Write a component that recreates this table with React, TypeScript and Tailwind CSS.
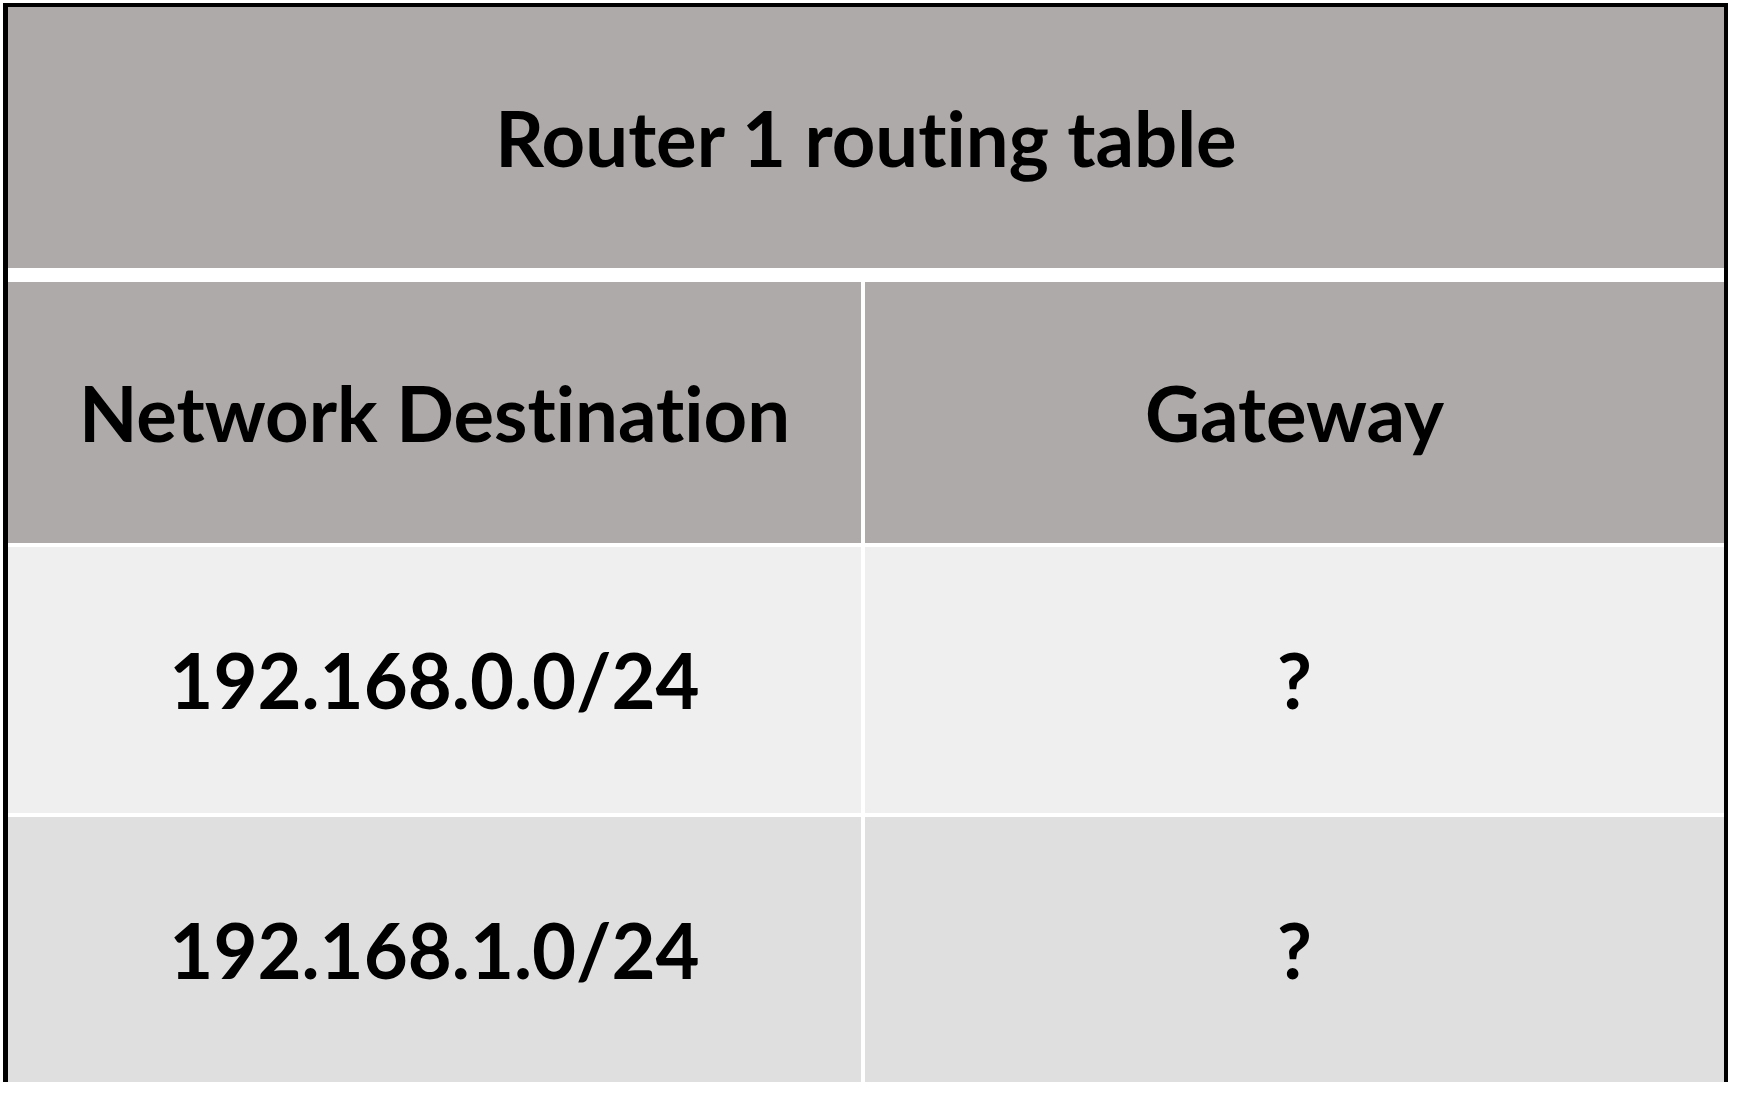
export default function App() {
  const rows = [
    { dest: '192.168.0.0/24', gw: '?', bg: 'bg-[#efefef]', h: 'h-[266px]' },
    { dest: '192.168.1.0/24', gw: '?', bg: 'bg-[#dfdfdf]', h: 'h-[265px]' },
  ];

  return (
    <div className="w-[1741px] h-[1100px] bg-white pl-[3px] pt-[3px] font-['Lato',sans-serif] font-bold text-black [font-variant-ligatures:none]">
      {/* Table */}
      <div className="w-[1725px] border-[5px] border-t-4 border-r-4 border-b-0 border-black bg-white flex flex-col">
        <div className="h-[261px] bg-[#aeaaa9] flex items-center justify-center text-[76px] leading-none">
          Router 1 routing table
        </div>
        <div className="h-[14px]" />
        <div className="flex gap-[4px] h-[261px]">
          <div className="w-[853px] bg-[#aeaaa9] flex items-center justify-center text-[76px] leading-none">
            Network Destination
          </div>
          <div className="flex-1 bg-[#aeaaa9] flex items-center justify-center text-[76px] leading-none">
            Gateway
          </div>
        </div>
        {rows.map((r) => (
          <div key={r.dest} className={`flex gap-[4px] mt-[4px] ${r.h}`}>
            <div className={`w-[853px] ${r.bg} flex items-center justify-center text-[76px] leading-none`}>
              {r.dest}
            </div>
            <div className={`flex-1 ${r.bg} flex items-center justify-center text-[76px] leading-none`}>
              {r.gw}
            </div>
          </div>
        ))}
      </div>
    </div>
  );
}
